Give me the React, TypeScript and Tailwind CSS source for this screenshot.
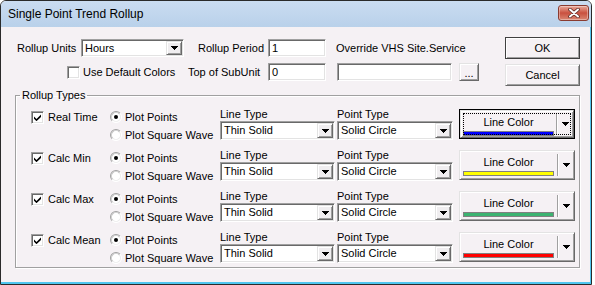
import React from "react";

const sunken =
  "bg-white border border-t-[#a0a0a0] border-l-[#a0a0a0] border-r-white border-b-white shadow-[inset_1px_1px_0_#696969,inset_-1px_-1px_0_#e3e3e3]";
const raised =
  "border border-t-[#e3e3e3] border-l-[#e3e3e3] border-r-[#696969] border-b-[#696969] shadow-[inset_1px_1px_0_#ffffff,inset_-1px_-1px_0_#a0a0a0]";

const Arrow = () => (
  <svg width="7" height="4" viewBox="0 0 7 4" shapeRendering="crispEdges">
    <path d="M0 0h7v1h-1v1h-1v1h-1v1h-1v-1h-1v-1h-1v-1h-1z" fill="#000" />
  </svg>
);

const Combo = ({ value, className }: { value: string; className: string }) => (
  <div className={`${sunken} ${className} flex items-center p-[1px]`}>
    <span className="flex-1 pl-[2px] leading-[13px]">{value}</span>
    <div className={`${raised} w-[16px] h-full bg-[#f0eef0] flex items-center justify-center`}>
      <Arrow />
    </div>
  </div>
);

const Check = ({ checked }: { checked?: boolean }) => (
  <div className={`${sunken} w-[13px] h-[13px] shrink-0 flex items-center justify-center`}>
    {checked && (
      <svg width="7" height="7" viewBox="0 0 7 7">
        <path d="M0 2.5L2.5 5L7 0.5V3L2.5 7.2L0 4.8Z" fill="#000" />
      </svg>
    )}
  </div>
);

const Radio = ({ checked }: { checked?: boolean }) => (
  <svg width="12" height="12" viewBox="0 0 12 12" className="shrink-0">
    <circle cx="6" cy="6" r="5.5" fill="#fff" />
    <circle cx="6" cy="6" r="5.5" fill="none" stroke="#a0a0a0" strokeDasharray="17.28 17.28" transform="rotate(135 6 6)" />
    <circle cx="6" cy="6" r="5.5" fill="none" stroke="#ffffff" strokeDasharray="17.28 17.28" transform="rotate(-45 6 6)" />
    <circle cx="6" cy="6" r="4.5" fill="none" stroke="#c8c8c8" strokeDasharray="14.14 14.14" transform="rotate(135 6 6)" />
    <circle cx="6" cy="6" r="4.5" fill="none" stroke="#ececec" strokeDasharray="14.14 14.14" transform="rotate(-45 6 6)" />
    {checked && <circle cx="6" cy="6" r="2" fill="#000" />}
  </svg>
);

const LineColor = ({ color, focused }: { color: string; focused?: boolean }) => {
  const inner = (
    <div
      className={`${raised} flex-1 flex bg-[#f5f1f4] ${
        focused ? "outline outline-1 outline-dotted outline-black outline-offset-[-4px]" : ""
      }`}
    >
      <div className="flex-1 flex flex-col items-center pt-[5px]">
        <span className="leading-[13px]">Line Color</span>
        <div className={`mt-[2px] w-[91px] h-[5px] border border-[#808080] ${color}`} />
      </div>
      <div className="w-[1px] my-[3px] bg-[#a0a0a0] shadow-[1px_0_0_#ffffff]" />
      <div className="w-[16px] flex items-center justify-center">
        <Arrow />
      </div>
    </div>
  );
  return focused ? (
    <div className="w-[116px] h-[30px] flex border border-black">{inner}</div>
  ) : (
    <div className="w-[116px] h-[30px] flex">{inner}</div>
  );
};

const rows = [
  { label: "Real Time", color: "bg-[#0000ff]", focused: true },
  { label: "Calc Min", color: "bg-[#ffff00]" },
  { label: "Calc Max", color: "bg-[#3cb371]" },
  { label: "Calc Mean", color: "bg-[#ff0000]" },
];

export default function App() {
  return (
    <div className="w-[595px] h-[285px] bg-white font-['Liberation_Sans',Arial,sans-serif] text-[11px] text-black">
      <div className="w-[592px] h-[285px] flex flex-col border border-[#2a2a2a] rounded-t-[6px] overflow-hidden">
        {/* title bar */}
        <div className="h-[26px] shrink-0 flex items-start justify-between bg-gradient-to-b from-[#cadcf1] to-[#b9d1ea]">
          <span className="pl-[7px] pt-[6px] text-[12px] leading-[14px] text-[#000]">Single Point Trend Rollup</span>
          <div className="mt-[4px] mr-[2px] w-[31px] h-[16px] rounded-[3px] border border-[#8a3b30] bg-gradient-to-b from-[#e9a99b] via-[#c9503f] to-[#d98672] shadow-[inset_0_0_0_1px_rgba(255,255,255,0.35)] flex items-center justify-center">
            <svg width="12" height="10" viewBox="0 0 12 10">
              <path d="M2 1.5L10 8.5M10 1.5L2 8.5" stroke="#5a2a25" strokeWidth="3.6" strokeLinecap="round" />
              <path d="M2 1.5L10 8.5M10 1.5L2 8.5" stroke="#ffffff" strokeWidth="2" strokeLinecap="round" />
            </svg>
          </div>
        </div>

        {/* body */}
        <div className="flex-1 bg-[#f5f1f4] pt-[10px] shadow-[inset_-1px_-2px_0_#4fc6ef]">
          <div className="flex pl-[16px]">
            <div className="w-[488px] pt-[2px]">
              <div className="flex items-center h-[18px]">
                <span className="w-[64px]">Rollup Units</span>
                <Combo value="Hours" className="w-[103px] h-[18px]" />
                <span className="ml-[14px] w-[70px]">Rollup Period</span>
                <div className={`${sunken} w-[58px] h-[18px] pl-[3px] flex items-center`}>1</div>
                <span className="ml-[10px]">Override VHS Site.Service</span>
              </div>
              <div className="flex items-center h-[18px] mt-[6px]">
                <div className="w-[171px] pl-[50px] flex items-center gap-[3px]">
                  <Check />
                  <span>Use Default Colors</span>
                </div>
                <span className="w-[80px]">Top of SubUnit</span>
                <div className={`${sunken} w-[58px] h-[18px] pl-[3px] flex items-center`}>0</div>
                <div className={`${sunken} ml-[11px] w-[115px] h-[18px]`} />
                <div className={`${raised} ml-[7px] w-[20px] h-[18px] bg-[#f5f1f4] flex items-end justify-center leading-[10px] pb-[2px]`}>
                  ...
                </div>
              </div>
            </div>
            <div className="flex flex-col">
              <div className="w-[75px] h-[22px] border border-[#404040] bg-[#f5f1f4] shadow-[inset_1px_1px_0_#ffffff,inset_-1px_-1px_0_#a0a0a0] flex items-center justify-center">
                OK
              </div>
              <div className={`${raised} mt-[5px] w-[75px] h-[22px] bg-[#f5f1f4] flex items-center justify-center`}>
                Cancel
              </div>
            </div>
          </div>

          <fieldset className="mt-[3px] ml-[14px] w-[565px] border border-[#a0a0a0] shadow-[inset_1px_1px_0_#ffffff,1px_1px_0_#ffffff] pb-[3px]">
            <legend className="ml-[4px] px-[2px] leading-[13px]">Rollup Types</legend>
            <div className="pl-[15px] pt-[5px] flex flex-col gap-[7px]">
              {rows.map((r) => (
                <div key={r.label} className="flex h-[34px]">
                  <div className="w-[79px] flex items-start pt-[4px] gap-[4px]">
                    <Check checked />
                    <span className="leading-[13px]">{r.label}</span>
                  </div>
                  <div className="w-[110px] flex flex-col pt-[4px] gap-[6px]">
                    <div className="flex items-center gap-[3px] h-[12px]">
                      <Radio checked />
                      <span>Plot Points</span>
                    </div>
                    <div className="flex items-center gap-[3px] h-[12px]">
                      <Radio />
                      <span>Plot Square Wave</span>
                    </div>
                  </div>
                  <div className="w-[117px] flex flex-col">
                    <span className="pt-[1px] leading-[13px]">Line Type</span>
                    <Combo value="Thin Solid" className="w-[115px] h-[19px]" />
                  </div>
                  <div className="w-[122px] flex flex-col">
                    <span className="pt-[1px] leading-[13px]">Point Type</span>
                    <Combo value="Solid Circle" className="w-[116px] h-[19px]" />
                  </div>
                  <div className="pt-[2px]">
                    <LineColor color={r.color} focused={r.focused} />
                  </div>
                </div>
              ))}
            </div>
          </fieldset>
        </div>
      </div>
    </div>
  );
}
